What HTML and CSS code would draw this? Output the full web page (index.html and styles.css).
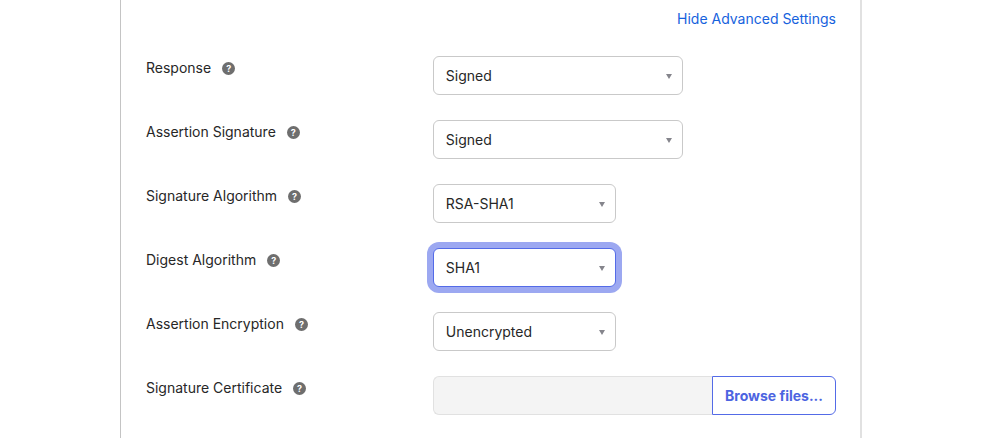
FILE: index.html
```html
<!DOCTYPE html>
<html lang="en">
<head>
    <meta charset="UTF-8">
    <meta name="viewport" content="width=device-width, initial-scale=1.0">
    <title>Advanced Settings</title>
    <link rel="stylesheet" href="styles.css">
</head>
<body>
    <form class="panel">
        <div class="toggle-row">
            <a href="#" class="toggle-link">Hide Advanced Settings</a>
        </div>

        <div class="field">
            <div class="field-label">
                <label for="response">Response</label>
                <button type="button" class="help">?</button>
            </div>
            <div class="select-box wide">
                <select id="response">
                    <option selected>Signed</option>
                </select>
            </div>
        </div>

        <div class="field">
            <div class="field-label">
                <label for="assertion-signature">Assertion Signature</label>
                <button type="button" class="help">?</button>
            </div>
            <div class="select-box wide">
                <select id="assertion-signature">
                    <option selected>Signed</option>
                </select>
            </div>
        </div>

        <div class="field">
            <div class="field-label">
                <label for="signature-algorithm">Signature Algorithm</label>
                <button type="button" class="help">?</button>
            </div>
            <div class="select-box">
                <select id="signature-algorithm">
                    <option selected>RSA-SHA1</option>
                </select>
            </div>
        </div>

        <div class="field">
            <div class="field-label">
                <label for="digest-algorithm">Digest Algorithm</label>
                <button type="button" class="help">?</button>
            </div>
            <div class="select-box">
                <select id="digest-algorithm" class="focused">
                    <option selected>SHA1</option>
                </select>
            </div>
        </div>

        <div class="field">
            <div class="field-label">
                <label for="assertion-encryption">Assertion Encryption</label>
                <button type="button" class="help">?</button>
            </div>
            <div class="select-box">
                <select id="assertion-encryption">
                    <option selected>Unencrypted</option>
                </select>
            </div>
        </div>

        <div class="field">
            <div class="field-label">
                <label for="signature-certificate">Signature Certificate</label>
                <button type="button" class="help">?</button>
            </div>
            <div class="file-box">
                <input type="text" id="signature-certificate" disabled>
                <button type="button" class="browse">Browse files...</button>
            </div>
        </div>
    </form>
</body>
</html>
```
FILE: styles.css
```css
* {
    box-sizing: border-box;
}

body {
    margin: 0;
    padding: 0 138px 0 120px;
    background: #fff;
    color: #272727;
    font-family: Inter, sans-serif;
    font-size: 14px;
    line-height: 20px;
}

.panel {
    display: flex;
    flex-direction: column;
    gap: 25px;
    min-height: 100vh;
    padding: 9px 24px 23px 25px;
    border-left: 1px solid #c4c4c4;
    border-right: 2px solid #e1e1e1;
}

.toggle-row {
    display: flex;
    justify-content: flex-end;
    padding-bottom: 2px;
}

.toggle-link {
    color: #1662dd;
    text-decoration: none;
}

.field {
    display: grid;
    grid-template-columns: 2fr 3fr;
    column-gap: 18px;
    align-items: start;
}

.field-label {
    display: flex;
    align-items: center;
    gap: 11px;
    padding-top: 2px;
}

.help {
    width: 13px;
    height: 13px;
    padding: 0;
    border: none;
    border-radius: 50%;
    background: #6e6e6e;
    color: #fff;
    font: bold 9px/13px Inter, sans-serif;
    text-align: center;
    cursor: pointer;
}

.select-box {
    position: relative;
    width: 183px;
}

.select-box.wide {
    width: 250px;
}

.select-box::after {
    content: "";
    position: absolute;
    top: 18px;
    right: 11px;
    border: 3px solid transparent;
    border-top: 5px solid #85858c;
    border-bottom: none;
    pointer-events: none;
}

select {
    appearance: none;
    display: block;
    width: 100%;
    height: 39px;
    padding: 0 32px 0 12px;
    border: 1px solid #c9c9c9;
    border-radius: 6px;
    background: #fff;
    color: #272727;
    font: inherit;
}

select:focus,
select.focused {
    border-color: #546be7;
    outline: none;
    box-shadow: 0 0 0 6px #9ca8f1;
}

.file-box {
    display: flex;
}

.file-box input {
    flex: 1;
    min-width: 0;
    height: 39px;
    padding: 0 12px;
    border: 1px solid #e1e1e1;
    border-right: none;
    border-radius: 6px 0 0 6px;
    background: #f4f4f4;
    font: inherit;
}

.browse {
    height: 39px;
    padding: 0 12px;
    border: 1px solid #546be7;
    border-radius: 0 6px 6px 0;
    background: #fff;
    color: #4c64e1;
    font: inherit;
    font-weight: 700;
    cursor: pointer;
}
```
